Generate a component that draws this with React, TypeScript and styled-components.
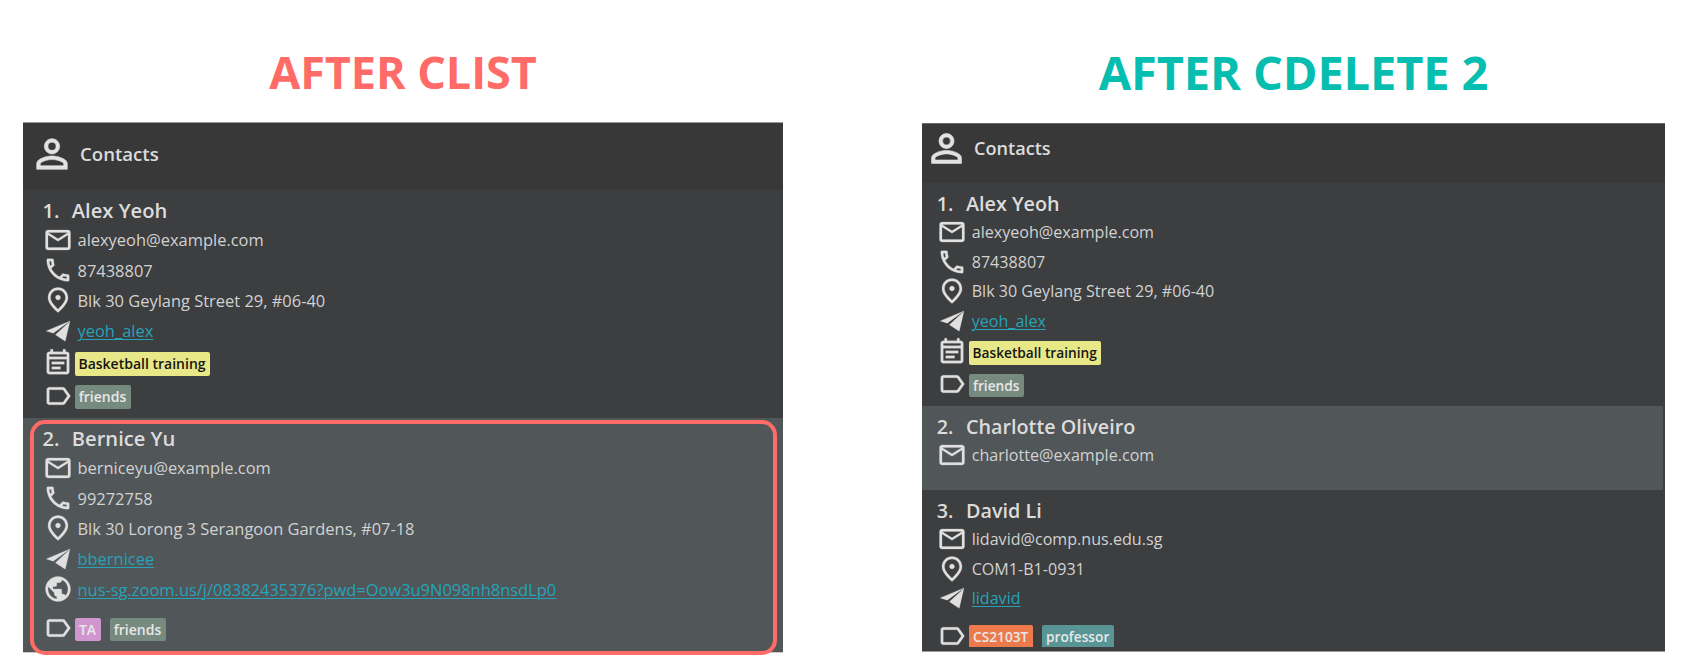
import React from 'react';
import styled, { createGlobalStyle } from 'styled-components';
import type { IconType } from 'react-icons';
import {
  MdPersonOutline,
  MdMailOutline,
  MdOutlinePhone,
  MdOutlinePlace,
  MdOutlineEventNote,
  MdLabelOutline,
  MdPublic,
} from 'react-icons/md';

const GlobalStyle = createGlobalStyle`
  * { box-sizing: border-box; }
  body { margin: 0; background: #fff; }
`;

const Page = styled.main`
  display: flex;
  align-items: flex-start;
  width: 1702px;
  height: 667px;
  padding-left: 23px;
  overflow: hidden;
  font-family: 'Open Sans', 'Noto Sans', sans-serif;
`;

const Column = styled.section<{ $width: number; $gap?: number }>`
  flex: none;
  width: ${(p) => p.$width}px;
  margin-right: ${(p) => p.$gap ?? 0}px;
`;

const Title = styled.h1<{ $color: string; $size: number; $height: number; $spacing: number }>`
  display: flex;
  justify-content: center;
  margin: 0;
  height: ${(p) => p.$height}px;
  padding-top: 40px;
  color: ${(p) => p.$color};
  font-size: ${(p) => p.$size}px;
  font-weight: 700;
  line-height: 64px;
  letter-spacing: ${(p) => p.$spacing}px;
  white-space: nowrap;
`;

const Panel = styled.div<{ $height: number; $top: string; $edge: string }>`
  position: relative;
  display: flex;
  flex-direction: column;
  height: ${(p) => p.$height}px;
  background: #3c3e3f;
  color: #dcdcdc;
  box-shadow: inset 0 1px 0 ${(p) => p.$top}, 0 1px 0 ${(p) => p.$edge};
`;

const Header = styled.header<{ $height: number; $pad: string; $icon: number; $size: number }>`
  display: flex;
  align-items: flex-start;
  flex: none;
  height: ${(p) => p.$height}px;
  margin-top: 1px;
  padding: ${(p) => p.$pad};
  background: #383838;
  font-size: ${(p) => p.$size}px;
  font-weight: 600;
  line-height: ${(p) => p.$icon}px;

  svg {
    width: ${(p) => p.$icon}px;
    height: ${(p) => p.$icon}px;
    margin-right: 5px;
    color: #e2e2e2;
    stroke: #e2e2e2;
    stroke-width: 0.3px;
  }

  svg path[fill='none'] { stroke: none; }
`;

const Card = styled.article<{ $height: number; $selected?: boolean; $pad: number; $edge: number }>`
  flex: none;
  height: ${(p) => p.$height}px;
  padding-left: ${(p) => p.$pad}px;
  border-right: ${(p) => p.$edge}px solid #3d4041;
  background: ${(p) => (p.$selected ? '#515658' : '#3c3e3f')};
  overflow: hidden;
`;

const Name = styled.h2<{ $height: number; $size: number }>`
  display: flex;
  margin: 0;
  height: ${(p) => p.$height}px;
  padding-top: 7px;
  font-size: ${(p) => p.$size}px;
  font-weight: 600;
  line-height: 27px;
  white-space: pre;

  span { width: 29.3px; }
`;

const Line = styled.div<{ $height: number; $size: number; $top?: number }>`
  display: flex;
  align-items: center;
  height: ${(p) => p.$height}px;
  margin-top: ${(p) => p.$top ?? 0}px;
  font-size: ${(p) => p.$size}px;
  white-space: nowrap;

  > svg {
    flex: none;
    width: 30px;
    height: 30px;
    margin-right: 5px;
    color: #e0e0e0;
    stroke: #e0e0e0;
    stroke-width: 0.2px;
  }

  > svg path[fill='none'] { stroke: none; }
`;

const Value = styled.span`
  color: #d2d2d2;
`;

const Link = styled.a`
  color: #26a3b8;
  text-decoration: underline;
  text-decoration-thickness: 1px;
  text-underline-offset: 2px;
`;

const Tags = styled.div`
  display: flex;
  gap: 9px;
  margin: 2px 0 0 -3px;
`;

const Tag = styled.span<{ $bg: string; $dark?: boolean; $width: number; $size: number; $cut?: boolean }>`
  width: ${(p) => p.$width}px;
  height: ${(p) => (p.$cut ? 22 : 23.5)}px;
  margin-bottom: ${(p) => (p.$cut ? 1.5 : 0)}px;
  border-radius: ${(p) => (p.$cut ? '2px 2px 0 0' : '2px')};
  background: ${(p) => p.$bg};
  color: ${(p) => (p.$dark ? '#151515' : '#e8e8e8')};
  font-size: ${(p) => p.$size}px;
  font-weight: 600;
  line-height: 23px;
  text-align: center;
`;

const Highlight = styled.div`
  position: absolute;
  left: 7px;
  top: 298px;
  width: 747px;
  height: 235px;
  border: 4px solid #ff6b66;
  border-radius: 15px;
`;

const PlaneIcon = () => (
  <svg viewBox="0 0 24 24" fill="currentColor">
    <path d="M2.6 11.9 21.6 4 8.2 13.7ZM21.5 4.3 17.8 20.2 9.9 15Z" />
  </svg>
);

type Kind = 'mail' | 'phone' | 'place' | 'telegram' | 'web' | 'event' | 'label';

const icons: Record<Kind, IconType | React.FC> = {
  mail: MdMailOutline,
  phone: MdOutlinePhone,
  place: MdOutlinePlace,
  telegram: PlaneIcon,
  web: MdPublic,
  event: MdOutlineEventNote,
  label: MdLabelOutline,
};

interface TagData { text: string; bg: string; width: number; dark?: boolean; cut?: boolean }
interface LineData { kind: Kind; text?: string; tags?: TagData[]; top?: number }
interface Contact { name: string; height: number; selected?: boolean; lines: LineData[] }
interface Metrics { pad: number; edge: number; name: number; nameSize: number; line: number; size: number; tag: number }

const ContactCard = ({ contact, index, m }: { contact: Contact; index: number; m: Metrics }) => (
  <Card $height={contact.height} $selected={contact.selected} $pad={m.pad} $edge={m.edge}>
    <Name $height={m.name} $size={m.nameSize}>
      <span>{index}.</span>
      {contact.name}
    </Name>
    {contact.lines.map((l) => {
      const Icon = icons[l.kind];
      const isLink = l.kind === 'telegram' || l.kind === 'web';
      return (
        <Line key={l.kind} $height={m.line} $size={m.size} $top={l.top}>
          <Icon />
          {l.text && (isLink ? <Link>{l.text}</Link> : <Value>{l.text}</Value>)}
          {l.tags && (
            <Tags>
              {l.tags.map((t) => (
                <Tag key={t.text} $bg={t.bg} $dark={t.dark} $width={t.width} $size={m.tag} $cut={t.cut}>
                  {t.text}
                </Tag>
              ))}
            </Tags>
          )}
        </Line>
      );
    })}
  </Card>
);

const left: Contact[] = [
  {
    name: 'Alex Yeoh',
    height: 228,
    lines: [
      { kind: 'mail', text: 'alexyeoh@example.com' },
      { kind: 'phone', text: '87438807' },
      { kind: 'place', text: 'Blk 30 Geylang Street 29, #06-40' },
      { kind: 'telegram', text: 'yeoh_alex' },
      { kind: 'event', top: 1.8, tags: [{ text: 'Basketball training', bg: '#e8e888', width: 135, dark: true }] },
      { kind: 'label', top: 2.8, tags: [{ text: 'friends', bg: '#778a7f', width: 56 }] },
    ],
  },
  {
    name: 'Bernice Yu',
    height: 234,
    selected: true,
    lines: [
      { kind: 'mail', text: 'berniceyu@example.com' },
      { kind: 'phone', text: '99272758' },
      { kind: 'place', text: 'Blk 30 Lorong 3 Serangoon Gardens, #07-18' },
      { kind: 'telegram', text: 'bbernicee' },
      { kind: 'web', text: 'nus-sg.zoom.us/j/08382435376?pwd=Oow3u9N098nh8nsdLp0' },
      {
        kind: 'label',
        top: 8.8,
        tags: [
          { text: 'TA', bg: '#cf96d0', width: 26 },
          { text: 'friends', bg: '#778a7f', width: 56 },
        ],
      },
    ],
  },
];

const right: Contact[] = [
  {
    name: 'Alex Yeoh',
    height: 223,
    lines: [
      { kind: 'mail', text: 'alexyeoh@example.com' },
      { kind: 'phone', text: '87438807' },
      { kind: 'place', text: 'Blk 30 Geylang Street 29, #06-40' },
      { kind: 'telegram', text: 'yeoh_alex' },
      { kind: 'event', top: 1, tags: [{ text: 'Basketball training', bg: '#e8e888', width: 132, dark: true }] },
      { kind: 'label', top: 3, tags: [{ text: 'friends', bg: '#778a7f', width: 55 }] },
    ],
  },
  {
    name: 'Charlotte Oliveiro',
    height: 84,
    selected: true,
    lines: [{ kind: 'mail', text: 'charlotte@example.com' }],
  },
  {
    name: 'David Li',
    height: 161,
    lines: [
      { kind: 'mail', text: 'lidavid@comp.nus.edu.sg' },
      { kind: 'place', text: 'COM1-B1-0931' },
      { kind: 'telegram', text: 'lidavid' },
      {
        kind: 'label',
        top: 7.8,
        tags: [
          { text: 'CS2103T', bg: '#ed7a4c', width: 64, cut: true },
          { text: 'professor', bg: '#599595', width: 72, cut: true },
        ],
      },
    ],
  },
];

const leftMetrics: Metrics = { pad: 19.5, edge: 0, name: 34.5, nameSize: 20.15, line: 30.38, size: 16.45, tag: 14 };
const rightMetrics: Metrics = { pad: 14.7, edge: 2, name: 34.2, nameSize: 19.75, line: 29.7, size: 16.1, tag: 13.7 };

export default function App() {
  return (
    <>
      <GlobalStyle />
      <Page>
        <Column $width={760} $gap={139}>
          <Title $color="#ff6b66" $size={45} $height={122} $spacing={-0.05}>AFTER CLIST</Title>
          <Panel $height={530} $top="#9a9a9a" $edge="#c9c9c9">
            <Header $height={67} $pad="8px 0 0 6px" $icon={46} $size={18.6}>
              <MdPersonOutline />
              Contacts
            </Header>
            {left.map((c, i) => <ContactCard key={c.name} contact={c} index={i + 1} m={leftMetrics} />)}
            <Highlight />
          </Panel>
        </Column>
        <Column $width={743}>
          <Title $color="#06beaf" $size={47} $height={123} $spacing={-0.15}>AFTER CDELETE 2</Title>
          <Panel $height={528} $top="#6b6b6b" $edge="#9a9a9a">
            <Header $height={59} $pad="1.5px 0 0 2px" $icon={45} $size={18.1}>
              <MdPersonOutline />
              Contacts
            </Header>
            {right.map((c, i) => <ContactCard key={c.name} contact={c} index={i + 1} m={rightMetrics} />)}
          </Panel>
        </Column>
      </Page>
    </>
  );
}
